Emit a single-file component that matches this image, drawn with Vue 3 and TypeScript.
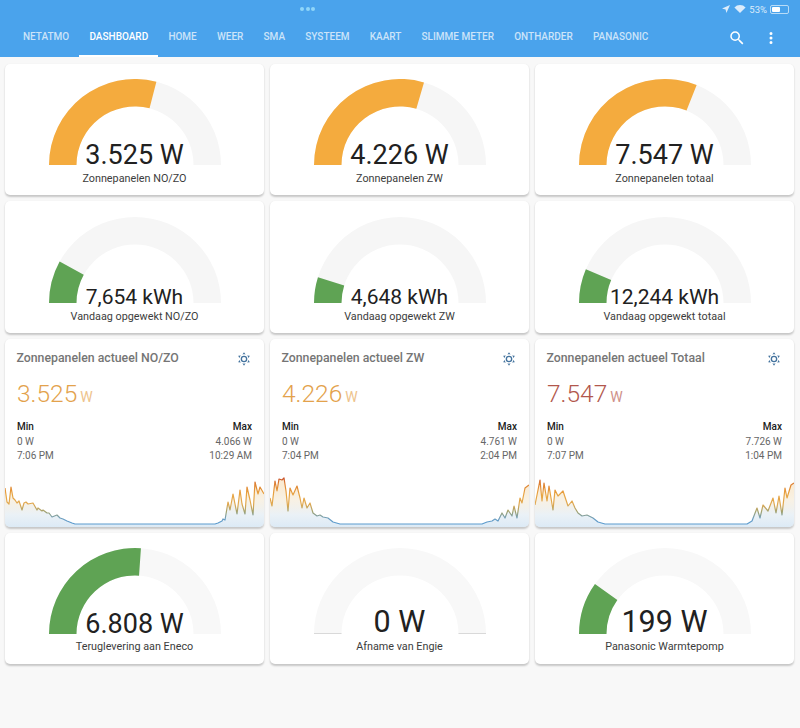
<script setup lang="ts">
const tabs = ['NETATMO', 'DASHBOARD', 'HOME', 'WEER', 'SMA', 'SYSTEEM', 'KAART', 'SLIMME METER', 'ONTHARDER', 'PANASONIC']

interface Gauge { value: string; label: string; frac: number; color: string; big?: boolean }

const ORANGE = '#f4ab3e'
const GREEN = '#5fa354'

const row1: Gauge[] = [
  { value: '3.525 W', label: 'Zonnepanelen NO/ZO', frac: 0.58, color: ORANGE },
  { value: '4.226 W', label: 'Zonnepanelen ZW', frac: 0.59, color: ORANGE },
  { value: '7.547 W', label: 'Zonnepanelen totaal', frac: 0.62, color: ORANGE },
]
const row2: Gauge[] = [
  { value: '7,654 kWh', label: 'Vandaag opgewekt NO/ZO', frac: 0.16, color: GREEN },
  { value: '4,648 kWh', label: 'Vandaag opgewekt ZW', frac: 0.097, color: GREEN },
  { value: '12,244 kWh', label: 'Vandaag opgewekt totaal', frac: 0.128, color: GREEN },
]
const row4: Gauge[] = [
  { value: '6.808 W', label: 'Teruglevering aan Eneco', frac: 0.522, color: GREEN },
  { value: '0 W', label: 'Afname van Engie', frac: 0, color: GREEN, big: true },
  { value: '199 W', label: 'Panasonic Warmtepomp', frac: 0.197, color: GREEN, big: true },
]

function arc(frac: number): string {
  const R = 86, r = 58.5, cx = 86, cy = 86
  const a = Math.PI * (1 - frac)
  const ox = cx + R * Math.cos(a), oy = cy - R * Math.sin(a)
  const ix = cx + r * Math.cos(a), iy = cy - r * Math.sin(a)
  return `M${cx - R} ${cy}A${R} ${R} 0 0 1 ${ox.toFixed(2)} ${oy.toFixed(2)}L${ix.toFixed(2)} ${iy.toFixed(2)}A${r} ${r} 0 0 0 ${cx - r} ${cy}Z`
}

type Pt = [number, number]
interface Graph { title: string; value: string; color: string; unitColor: string; min: string; minT: string; max: string; maxT: string; id: string; pts: Pt[] }

const graphs: Graph[] = [
  {
    id: 'a', title: 'Zonnepanelen actueel NO/ZO', value: '3.525', color: '#e3a24c', unitColor: '#eec38c',
    min: '0 W', minT: '7:06 PM', max: '4.066 W', maxT: '10:29 AM',
    pts: [[0,36],[2,22],[4,20],[6,37],[8,26],[10,24],[12,21],[14,23],[17,14],[19,21],[21,22],[23,20],[28,21],[32,14],[33,16],[37,13],[38,14],[42,11],[44,11],[47,7],[52,9],[55,6],[58,5],[62,3],[67,1],[70,0],[210,0],[213,1],[217,3],[218,5],[220,4],[223,22],[225,14],[228,30],[232,10],[235,34],[237,20],[240,10],[242,37],[245,24],[248,9],[250,42],[253,30],[255,37],[259,30]],
  },
  {
    id: 'b', title: 'Zonnepanelen actueel ZW', value: '4.226', color: '#e3a24c', unitColor: '#eec38c',
    min: '0 W', minT: '7:04 PM', max: '4.761 W', maxT: '2:04 PM',
    pts: [[0,26],[2,18],[5,43],[7,33],[9,45],[12,44],[14,46],[16,33],[18,13],[20,36],[23,29],[27,38],[30,26],[32,16],[34,26],[37,16],[40,21],[43,11],[47,8],[50,9],[53,7],[58,6],[63,2],[70,0],[212,0],[217,2],[222,3],[225,5],[228,3],[232,11],[235,6],[238,14],[242,8],[244,18],[247,6],[250,26],[252,21],[255,36],[259,39]],
  },
  {
    id: 'c', title: 'Zonnepanelen actueel Totaal', value: '7.547', color: '#b2574c', unitColor: '#cf9189',
    min: '0 W', minT: '7:07 PM', max: '7.726 W', maxT: '1:04 PM',
    pts: [[0,19],[2,29],[5,44],[7,23],[9,41],[12,23],[14,38],[18,14],[20,34],[23,28],[28,33],[31,24],[33,18],[37,23],[40,16],[43,11],[47,8],[52,9],[58,6],[63,2],[70,0],[212,0],[217,3],[222,16],[225,6],[228,19],[233,13],[238,26],[241,11],[244,28],[247,9],[250,36],[252,26],[256,39],[259,41]],
  },
]

const W = 259, H = 50, BASE = 47

function line(p: Pt[]): string {
  return p.map(([x, h]) => `${x},${BASE - h}`).join(' ')
}
function area(p: Pt[]): string {
  return `0,${H} ${line(p)} ${W},${H}`
}

const sun = 'M12,7A5,5 0 0,1 17,12A5,5 0 0,1 12,17A5,5 0 0,1 7,12A5,5 0 0,1 12,7M12,9A3,3 0 0,0 9,12A3,3 0 0,0 12,15A3,3 0 0,0 15,12A3,3 0 0,0 12,9M12,2L14.39,5.42C13.65,5.15 12.84,5 12,5C11.16,5 10.35,5.15 9.61,5.42L12,2M3.34,7L7.5,6.65C6.9,7.16 6.36,7.78 5.94,8.5C5.5,9.24 5.25,10 5.11,10.79L3.34,7M3.36,17L5.12,13.23C5.26,14 5.53,14.78 5.95,15.5C6.37,16.24 6.91,16.86 7.5,17.37L3.36,17M20.65,7L18.88,10.79C18.74,10 18.47,9.23 18.05,8.5C17.63,7.78 17.1,7.15 16.5,6.64L20.65,7M20.64,17L16.5,17.36C17.09,16.85 17.62,16.22 18.04,15.5C18.46,14.77 18.73,14 18.87,13.21L20.64,17M12,22L9.59,18.56C10.33,18.83 11.14,19 12,19C12.82,19 13.63,18.83 14.37,18.56L12,22Z'
</script>

<template>
  <div class="page">
    <header class="bar">
      <div class="status">
        <span class="dots"><i></i><i></i><i></i></span>
        <div class="sys">
          <svg width="10" height="10" viewBox="0 0 10 10"><path d="M9 1 1 4.6l3.6.8.8 3.6z" fill="#dcecfb" /></svg>
          <svg width="12" height="10" viewBox="0 0 12 10"><path d="M6 9 .4 3.4a8 8 0 0 1 11.2 0z" fill="#dcecfb" /></svg>
          <span class="pct">53%</span>
          <span class="batt"><b></b></span>
        </div>
      </div>
      <nav class="tabs">
        <div class="tablist">
          <span v-for="t in tabs" :key="t" class="tab" :class="{ active: t === 'DASHBOARD' }">{{ t }}</span>
        </div>
        <div class="actions">
          <svg width="18" height="18" viewBox="0 0 24 24"><path fill="#fff" d="M9.5,3A6.5,6.5 0 0,1 16,9.5C16,11.11 15.41,12.59 14.44,13.73L14.71,14H15.5L20.5,19L19,20.5L14,15.5V14.71L13.73,14.44C12.59,15.41 11.11,16 9.5,16A6.5,6.5 0 0,1 3,9.5A6.5,6.5 0 0,1 9.5,3M9.5,5C7,5 5,7 5,9.5C5,12 7,14 9.5,14C12,14 14,12 14,9.5C14,7 12,5 9.5,5Z" /></svg>
          <svg width="18" height="18" viewBox="0 0 24 24"><path fill="#fff" d="M12,16A2,2 0 0,1 14,18A2,2 0 0,1 12,20A2,2 0 0,1 10,18A2,2 0 0,1 12,16M12,10A2,2 0 0,1 14,12A2,2 0 0,1 12,14A2,2 0 0,1 10,12A2,2 0 0,1 12,10M12,4A2,2 0 0,1 14,6A2,2 0 0,1 12,8A2,2 0 0,1 10,6A2,2 0 0,1 12,4Z" /></svg>
        </div>
      </nav>
    </header>

    <main class="grid">
      <section v-for="g in row1" :key="g.label" class="card gauge">
        <div class="dial">
          <svg width="172" height="86" viewBox="0 0 172 86">
            <path :d="arc(1)" fill="#f6f6f6" />
            <path :d="arc(g.frac)" :fill="g.color" />
          </svg>
          <span class="val">{{ g.value }}</span>
        </div>
        <div class="lbl">{{ g.label }}</div>
      </section>

      <section v-for="g in row2" :key="g.label" class="card gauge r2">
        <div class="dial">
          <svg width="172" height="86" viewBox="0 0 172 86">
            <path :d="arc(1)" fill="#f6f6f6" />
            <path :d="arc(g.frac)" :fill="g.color" />
          </svg>
          <span class="val small">{{ g.value }}</span>
        </div>
        <div class="lbl">{{ g.label }}</div>
      </section>

      <section v-for="g in graphs" :key="g.id" class="card graph">
        <div class="head">
          <span class="title">{{ g.title }}</span>
          <svg class="sun" width="16" height="16" viewBox="0 0 24 24"><path :d="sun" fill="#44739e" /></svg>
        </div>
        <div class="state">
          <span class="num" :style="{ color: g.color }">{{ g.value }}</span>
          <span class="unit" :style="{ color: g.unitColor }">W</span>
        </div>
        <div class="stats">
          <div><b>Min</b><span>{{ g.min }}</span><span>{{ g.minT }}</span></div>
          <div class="right"><b>Max</b><span>{{ g.max }}</span><span>{{ g.maxT }}</span></div>
        </div>
        <svg class="spark" :width="W" :height="H" :viewBox="`0 0 ${W} ${H}`">
          <defs>
            <linearGradient :id="'s' + g.id" gradientUnits="userSpaceOnUse" x1="0" y1="1" x2="0" y2="47">
              <stop offset="0" stop-color="#c8502a" />
              <stop offset="0.12" stop-color="#dd7f32" />
              <stop offset="0.35" stop-color="#e8a340" />
              <stop offset="0.57" stop-color="#e0a850" />
              <stop offset="0.74" stop-color="#9fa272" />
              <stop offset="0.89" stop-color="#6a9ec4" />
              <stop offset="1" stop-color="#5a9bcf" />
            </linearGradient>
            <linearGradient :id="'f' + g.id" gradientUnits="userSpaceOnUse" x1="0" y1="1" x2="0" y2="50">
              <stop offset="0" stop-color="#f0b860" stop-opacity="0.3" />
              <stop offset="0.45" stop-color="#eddcbc" stop-opacity="0.4" />
              <stop offset="0.75" stop-color="#d5e3ee" stop-opacity="0.5" />
              <stop offset="1" stop-color="#c5dcef" stop-opacity="0.6" />
            </linearGradient>
          </defs>
          <polygon :points="area(g.pts)" :fill="`url(#f${g.id})`" />
          <polyline :points="line(g.pts)" fill="none" :stroke="`url(#s${g.id})`" stroke-width="1.2" stroke-linejoin="round" />
        </svg>
      </section>

      <section v-for="g in row4" :key="g.label" class="card gauge r4">
        <div class="dial">
          <svg width="172" height="86" viewBox="0 0 172 86">
            <path :d="arc(1)" fill="#f8f8f8" />
            <path v-if="g.frac > 0" :d="arc(g.frac)" :fill="g.color" />
            <path v-else d="M0 85.5H27.5M144.5 85.5H172" stroke="#d9d9d9" stroke-width="1" />
          </svg>
          <span class="val" :class="{ big: g.big }">{{ g.value }}</span>
        </div>
        <div class="lbl">{{ g.label }}</div>
      </section>
    </main>
  </div>
</template>

<style>
html, body { margin: 0; background: #f8f8f8; }
</style>

<style scoped>
.page {
  width: 800px;
  height: 728px;
  overflow: hidden;
  background: #f8f8f8;
  font-family: Roboto, "Liberation Sans", sans-serif;
  color: #212121;
}
.bar {
  height: 57px;
  background: #4aa3ec;
  display: flex;
  flex-direction: column;
}
.status {
  height: 18px;
  position: relative;
  display: flex;
  justify-content: flex-end;
  align-items: center;
  padding-right: 11px;
}
.dots {
  position: absolute;
  left: 300px;
  top: 7px;
  display: flex;
  gap: 1.5px;
}
.dots i {
  width: 4px;
  height: 4px;
  border-radius: 50%;
  background: #8fd6fa;
}
.sys {
  display: flex;
  align-items: center;
  gap: 3px;
  color: #dcecfb;
  font-size: 9.5px;
}
.batt {
  width: 15px;
  height: 5px;
  border: 1px solid #b9dcf7;
  border-radius: 2px;
  display: block;
  padding: 1px;
}
.batt b {
  display: block;
  width: 8px;
  height: 5px;
  background: #fff;
  border-radius: 1px;
}
.tabs {
  flex: 1;
  display: flex;
  justify-content: space-between;
  align-items: stretch;
}
.tablist {
  display: flex;
  padding-left: 13px;
  gap: 0.2px;
}
.tab {
  padding: 0 10px 2px;
  display: flex;
  align-items: center;
  font-size: 10px;
  font-weight: 500;
  color: rgba(255, 255, 255, 0.72);
  box-sizing: border-box;
}
.tab.active {
  color: #fff;
  box-shadow: inset 0 -2px 0 #fff;
}
.actions {
  display: flex;
  gap: 16.5px;
  padding-right: 20px;
  align-items: center;
}
.grid {
  display: grid;
  grid-template-columns: repeat(3, 259px);
  grid-template-rows: 131px 132px 188px 131px;
  column-gap: 6px;
  row-gap: 6px;
  padding: 7px 0 0 5px;
}
.card {
  background: #fff;
  border-radius: 5px;
  box-shadow: 0 1.5px 2px rgba(0, 0, 0, 0.2);
  overflow: hidden;
  position: relative;
}
.gauge {
  display: flex;
  flex-direction: column;
  align-items: center;
}
.dial {
  position: relative;
  width: 172px;
  height: 86px;
  margin-top: 15px;
}
.r2 .dial { margin-top: 16px; }
.dial svg { display: block; }
.val {
  position: absolute;
  left: 0;
  right: 0;
  bottom: -6px;
  text-align: center;
  font-size: 27px;
  line-height: 32px;
  white-space: nowrap;
}
.val.small { font-size: 21px; bottom: -7px; line-height: 26px; }
.val.big { font-size: 30.5px; bottom: -4px; }
.lbl {
  font-size: 10.8px;
  line-height: 14px;
  margin-top: 7px;
  color: #3c3c3c;
}
.r4 .lbl { margin-top: 6px; }
.graph {
  display: flex;
  flex-direction: column;
}
.head {
  display: flex;
  justify-content: space-between;
  padding: 12px 12px 0 11.5px;
  height: 20px;
}
.title {
  font-size: 12.3px;
  font-weight: 500;
  color: #757575;
  line-height: 15px;
  white-space: nowrap;
}
.state {
  display: flex;
  align-items: baseline;
  padding: 7px 12px 0;
  height: 32px;
}
.num { font-size: 24.5px; font-weight: 300; line-height: 32px; }
.unit { font-size: 14px; margin-left: 3px; }
.stats {
  display: flex;
  justify-content: space-between;
  padding: 10px 12px 0;
  font-size: 10px;
  line-height: 14.7px;
  color: #666;
}
.stats div { display: flex; flex-direction: column; }
.stats .right { text-align: right; }
.stats b { font-weight: 500; color: #212121; }
.spark {
  position: absolute;
  left: 0;
  bottom: 0;
  display: block;
}
</style>
